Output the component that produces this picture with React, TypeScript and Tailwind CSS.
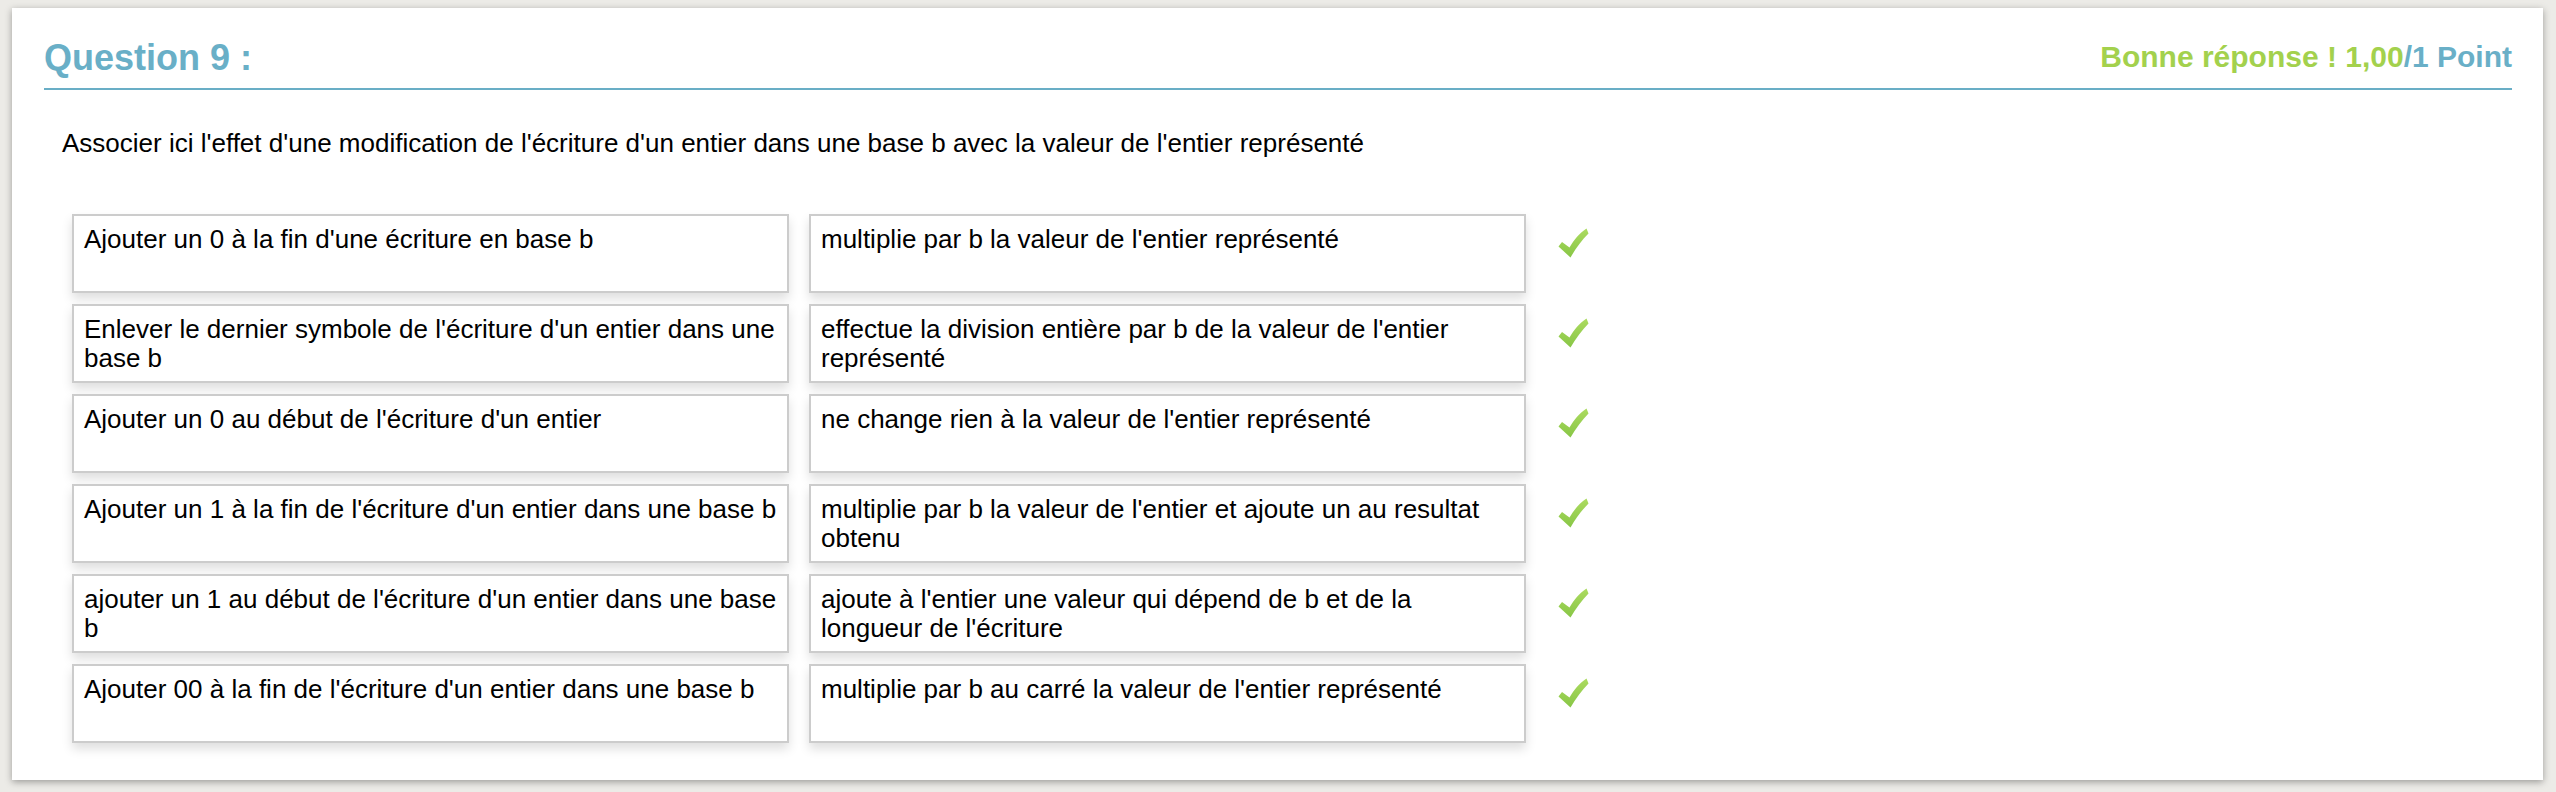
const pairs: { left: string[]; right: string[] }[] = [
  {
    left: ["Ajouter un 0 à la fin d'une écriture en base b"],
    right: ["multiplie par b la valeur de l'entier représenté"],
  },
  {
    left: ["Enlever le dernier symbole de l'écriture d'un entier dans une", "base b"],
    right: ["effectue la division entière par b de la valeur de l'entier", "représenté"],
  },
  {
    left: ["Ajouter un 0 au début de l'écriture d'un entier"],
    right: ["ne change rien à la valeur de l'entier représenté"],
  },
  {
    left: ["Ajouter un 1 à la fin de l'écriture d'un entier dans une base b"],
    right: ["multiplie par b la valeur de l'entier et ajoute un au resultat", "obtenu"],
  },
  {
    left: ["ajouter un 1 au début de l'écriture d'un entier dans une base", "b"],
    right: ["ajoute à l'entier une valeur qui dépend de b et de la", "longueur de l'écriture"],
  },
  {
    left: ["Ajouter 00 à la fin de l'écriture d'un entier dans une base b"],
    right: ["multiplie par b au carré la valeur de l'entier représenté"],
  },
];

function CheckMark() {
  return (
    <svg width="31" height="30" viewBox="0 0 31 30" className="shrink-0">
      <defs>
        <linearGradient id="chk" x1="0" y1="0" x2="0" y2="1">
          <stop offset="0" stopColor="#acdb60" />
          <stop offset="1" stopColor="#88c646" />
        </linearGradient>
      </defs>
      <path
        d="M0.5 18.5 L4 14 L11.5 19.5 C16 12 21 5.5 28.5 0.5 L30.5 5.5 C24 12 18 20 12.5 29.5 Z"
        fill="url(#chk)"
      />
    </svg>
  );
}

function AnswerBox({ lines }: { lines: string[] }) {
  return (
    <div className="w-[717px] h-[79px] border-2 border-[#cccccc] bg-white pt-[9px] pl-[10px] shadow-[0_6px_10px_rgba(0,0,0,0.13)] text-[26px] leading-[29px] text-black whitespace-nowrap">
      {lines.map((l, i) => (
        <div key={i}>{l}</div>
      ))}
    </div>
  );
}

export default function App() {
  return (
    <div
      className="w-[2556px] h-[792px] bg-[#ecebe7] pt-[8px] pl-[12px] pr-[13px]"
      style={{ fontFamily: '"Liberation Sans", Arial, Helvetica, sans-serif' }}
    >
      <div className="h-[772px] bg-white shadow-[0_2px_7px_rgba(0,0,0,0.35)] pl-[32px] pr-[31px]">
        {/* Header */}
        <div className="h-[82px] border-b-2 border-[#69aec6] flex justify-between items-start">
          <span className="mt-[32px] text-[36px] leading-[36px] font-bold text-[#69afc7]">
            Question 9 :
          </span>
          <span className="mt-[34px] text-[30px] leading-[30px] font-bold">
            <span className="text-[#a3d14d]">Bonne réponse ! 1,00</span>
            <span className="text-[#69afc7]">/1 Point</span>
          </span>
        </div>

        <p className="mt-[38px] ml-[18px] text-[26px] leading-[30px] text-black">
          Associer ici l'effet d'une modification de l'écriture d'un entier dans une base b avec la valeur de l'entier représenté
        </p>

        {/* Matching rows */}
        <div className="mt-[56px] ml-[28px] flex flex-col gap-[11px]">
          {pairs.map((p, i) => (
            <div key={i} className="flex items-start">
              <AnswerBox lines={p.left} />
              <div className="ml-[20px]">
                <AnswerBox lines={p.right} />
              </div>
              <div className="ml-[32px] mt-[14px]">
                <CheckMark />
              </div>
            </div>
          ))}
        </div>
      </div>
    </div>
  );
}
